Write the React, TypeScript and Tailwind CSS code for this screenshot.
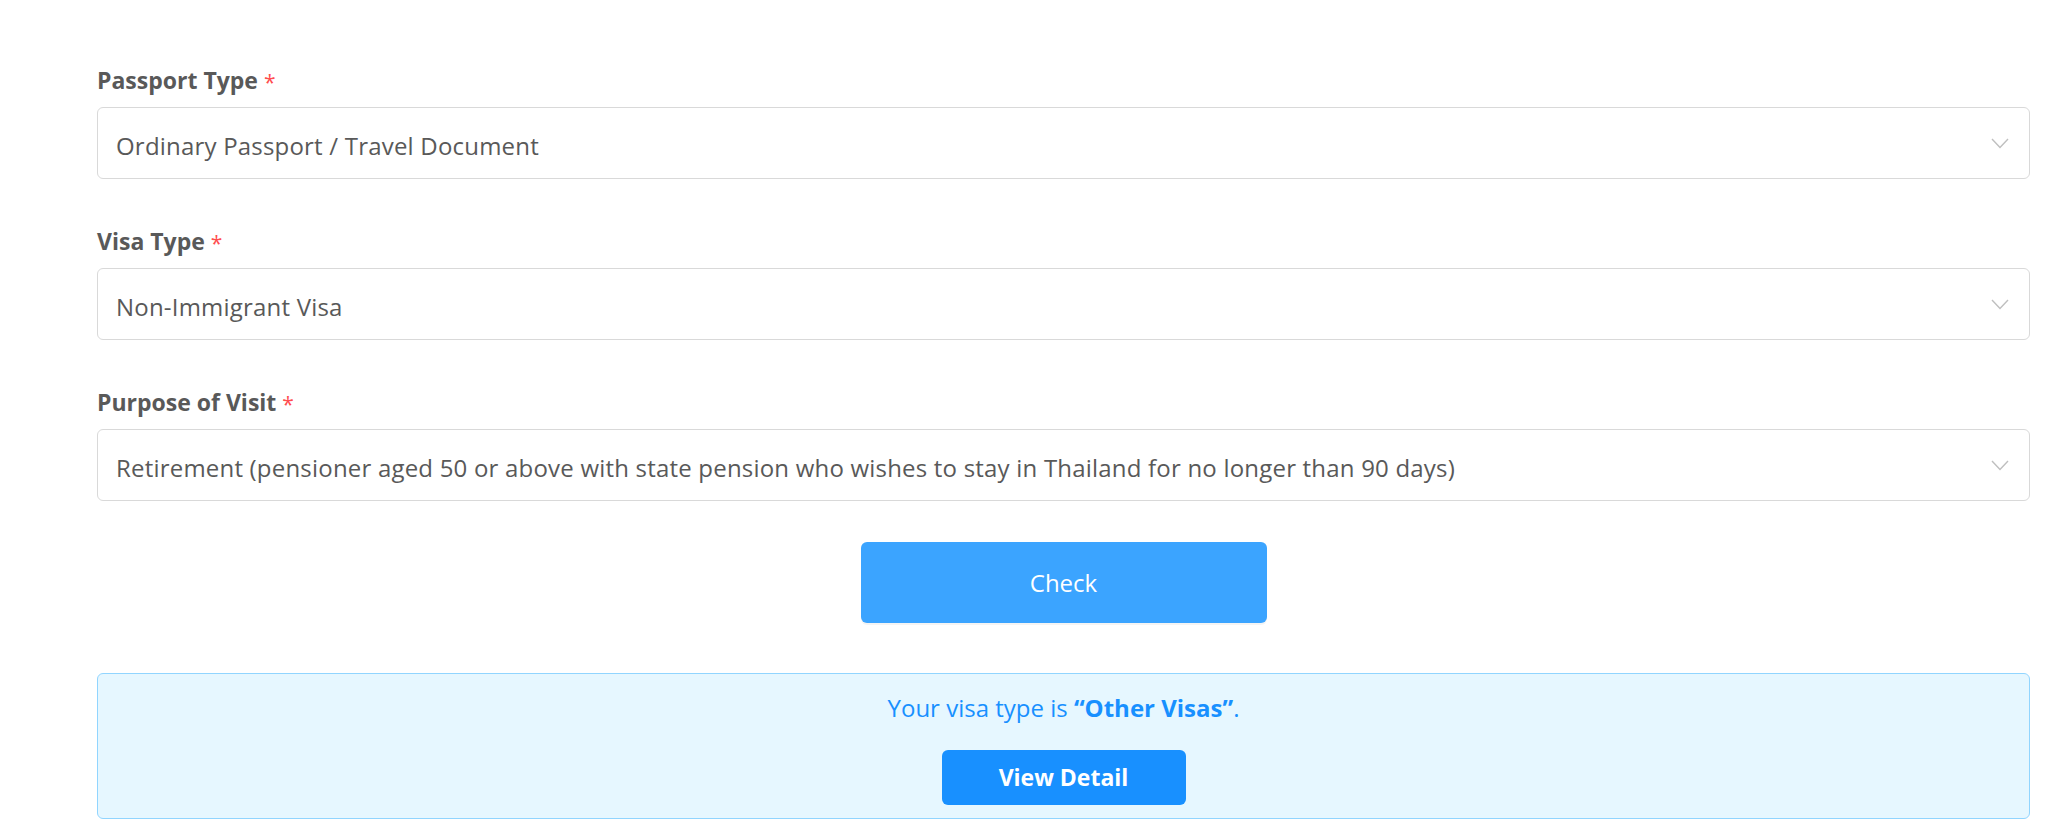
import React from "react";

function Chevron() {
  return (
    <svg width="18" height="11" viewBox="0 0 18 11" fill="none">
      <polyline points="1,1 9,9.5 17,1" stroke="#bfbfbf" strokeWidth="1.4" fill="none" />
    </svg>
  );
}

function Field({ label, value, last }: { label: string; value: string; last?: boolean }) {
  return (
    <div className={last ? "" : "mb-[49px]"}>
      <div className="h-[40px] flex items-center pb-[14px] text-[23px] font-bold text-[#595959] leading-none">
        <span>{label}</span>
        <span className="ml-[6px] text-[21px] font-normal text-[#ff4d4f] mt-[4px]">*</span>
      </div>
      <div className="h-[72px] border border-[#d9d9d9] rounded-[6px] bg-white flex items-center justify-between pl-[18px] pr-[20px]">
        <span className="text-[24px] text-[#595959] leading-none pt-[6px] tracking-[0.2px]">{value}</span>
        <Chevron />
      </div>
    </div>
  );
}

export default function App() {
  return (
    <div
      className="w-full h-[833px] bg-white overflow-hidden"
      style={{ fontFamily: '"Open Sans", "Noto Sans", sans-serif' }}
    >
      <div className="ml-[97px] w-[1933px] pt-[67px]">
        <Field label="Passport Type" value="Ordinary Passport / Travel Document" />
        <Field label="Visa Type" value="Non-Immigrant Visa" />
        <Field
          label="Purpose of Visit"
          value="Retirement (pensioner aged 50 or above with state pension who wishes to stay in Thailand for no longer than 90 days)"
          last
        />
        <div className="flex justify-center mt-[41px]">
          <button className="w-[406px] h-[81px] rounded-[6px] bg-[#3ba4ff] text-white text-[24px] shadow-[0_2px_0_rgba(0,0,0,0.045)]">
            Check
          </button>
        </div>
        <div className="mt-[50px] h-[146px] border border-[#91d5ff] bg-[#e6f7ff] rounded-[6px] flex flex-col items-center pt-[16px]">
          <div className="text-[24px] text-[#1890ff] leading-[36px]">
            Your visa type is <span className="font-bold">“Other Visas”</span>.
          </div>
          <button className="mt-[24px] w-[244px] h-[55px] rounded-[6px] bg-[#1890ff] text-white text-[23px] font-bold">
            View Detail
          </button>
        </div>
      </div>
    </div>
  );
}
